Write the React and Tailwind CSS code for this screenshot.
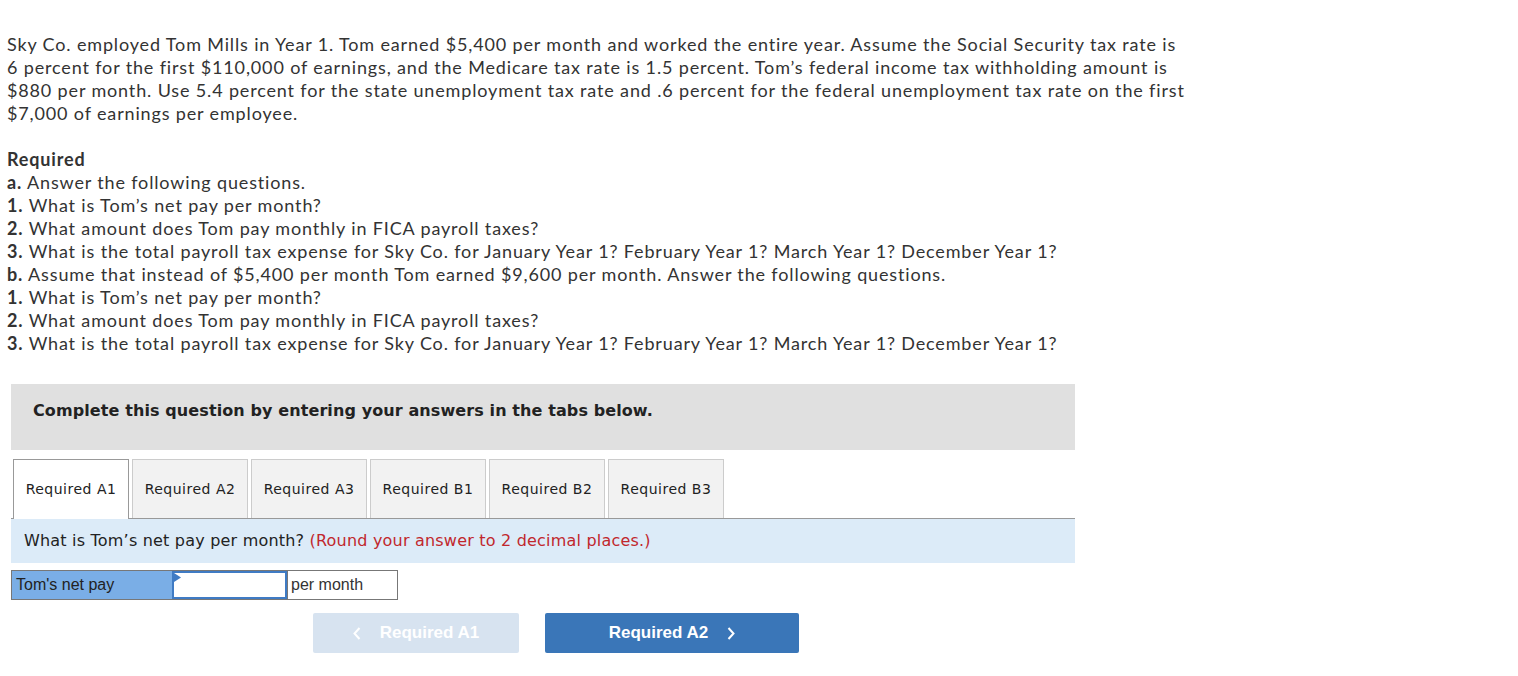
import { useState } from "react"

const tabs = ["Required A1", "Required A2", "Required A3", "Required B1", "Required B2", "Required B3"]

const body = { fontFamily: "Lato, 'Open Sans', sans-serif" }
const verdana = { fontFamily: "'DejaVu Sans', Verdana, sans-serif" }
const arial = { fontFamily: "'Liberation Sans', Arial, sans-serif" }

function Item({ mark, children }) {
  return (
    <div>
      <span className="font-bold">{mark}</span> {children}
    </div>
  )
}

export default function App() {
  const [active, setActive] = useState(0)
  const [value, setValue] = useState("")

  return (
    <div className="min-h-screen bg-white pt-[33px] text-[#333]">
      <div className="pl-[7px] text-[18px] leading-[23px] tracking-[0.85px]" style={body}>
        <p>
          Sky Co. employed Tom Mills in Year 1. Tom earned $5,400 per month and worked the entire year. Assume the Social Security tax rate is
          <br />
          6 percent for the first $110,000 of earnings, and the Medicare tax rate is 1.5 percent. Tom’s federal income tax withholding amount is
          <br />
          $880 per month. Use 5.4 percent for the state unemployment tax rate and .6 percent for the federal unemployment tax rate on the first
          <br />
          $7,000 of earnings per employee.
        </p>

        <div className="mt-[23px]">
          <div className="font-bold">Required</div>
          <Item mark="a.">Answer the following questions.</Item>
          <Item mark="1.">What is Tom’s net pay per month?</Item>
          <Item mark="2.">What amount does Tom pay monthly in FICA payroll taxes?</Item>
          <Item mark="3.">What is the total payroll tax expense for Sky Co. for January Year 1? February Year 1? March Year 1? December Year 1?</Item>
          <Item mark="b.">Assume that instead of $5,400 per month Tom earned $9,600 per month. Answer the following questions.</Item>
          <Item mark="1.">What is Tom’s net pay per month?</Item>
          <Item mark="2.">What amount does Tom pay monthly in FICA payroll taxes?</Item>
          <Item mark="3.">What is the total payroll tax expense for Sky Co. for January Year 1? February Year 1? March Year 1? December Year 1?</Item>
        </div>
      </div>

      <div className="ml-[11px] mt-[29px] w-[1064px]">
        <div className="h-[66px] bg-[#e0e0e0] pl-[22px] pt-[17px] text-[16px] leading-[20px] font-bold tracking-[0.1px] text-[#222]" style={verdana}>
          Complete this question by entering your answers in the tabs below.
        </div>

        <div className="mt-[9px] flex items-end border-b border-[#999] pl-[2px]" style={verdana}>
          {tabs.map((t, i) => (
            <button
              key={t}
              onClick={() => setActive(i)}
              className={
                i === active
                  ? "relative -mb-px mr-[3px] flex h-[60px] w-[116px] items-center justify-center border border-b-0 border-[#999] bg-white text-[14px] tracking-[0.5px] text-[#222]"
                  : "mr-[3px] flex h-[59px] w-[116px] items-center justify-center border border-b-0 border-[#ccc] bg-[#f2f2f2] text-[14px] tracking-[0.5px] text-[#222]"
              }
            >
              {t}
            </button>
          ))}
        </div>

        <div className="flex h-[44px] items-center bg-[#dcebf8] pl-[13px] text-[16px] tracking-[0.2px] text-[#222]" style={verdana}>
          What is Tom’s net pay per month?&nbsp;<span className="text-[#c1272d]">(Round your answer to 2 decimal places.)</span>
        </div>

        <div className="mt-[7px] flex h-[30px] w-[387px] border border-[#777] text-[16px]" style={arial}>
          <div className="flex w-[160px] items-center bg-[#7aaee6] pl-[4px] text-[#222]">Tom's net pay</div>
          <div className="relative w-[115px] border-2 border-[#3f7bc4] bg-white">
            <svg className="absolute left-0 top-0" width="7" height="9" viewBox="0 0 7 9">
              <path d="M0 0 L7 4.5 L0 9 Z" fill="#3f7bc4" />
            </svg>
            <input
              value={value}
              onChange={(e) => setValue(e.target.value)}
              className="h-full w-full bg-transparent px-1 outline-none"
            />
          </div>
          <div className="flex flex-1 items-center border-l border-[#777] pl-[3px] text-[#333]">per month</div>
        </div>

        <div className="mt-[13px] flex gap-[26px] pl-[302px]" style={arial}>
          <button className="flex h-[40px] w-[206px] items-center justify-center gap-[19px] rounded-[2px] bg-[#d7e3f0] text-[17px] font-bold text-white">
            <svg width="8" height="13" viewBox="0 0 8 13">
              <path d="M6.5 1 L1.5 6.5 L6.5 12" fill="none" stroke="white" strokeWidth="2" />
            </svg>
            Required A1
          </button>
          <button className="flex h-[40px] w-[254px] items-center justify-center gap-[19px] rounded-[2px] bg-[#3a76b8] text-[17px] font-bold text-white">
            Required A2
            <svg width="8" height="13" viewBox="0 0 8 13">
              <path d="M1.5 1 L6.5 6.5 L1.5 12" fill="none" stroke="white" strokeWidth="2" />
            </svg>
          </button>
        </div>
      </div>
    </div>
  )
}
